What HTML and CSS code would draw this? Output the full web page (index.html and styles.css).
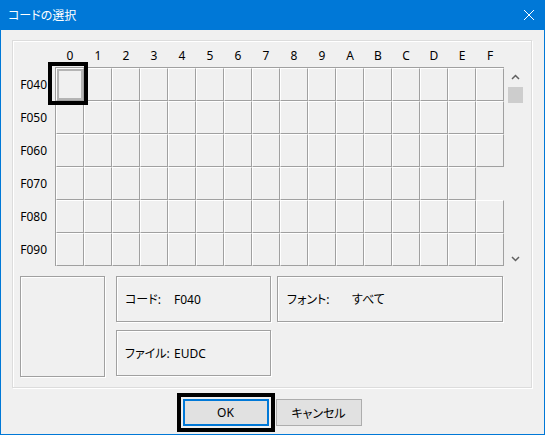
FILE: index.html
```html
<!DOCTYPE html>
<html lang="ja">
<head>
  <meta charset="UTF-8" />
  <title>コードの選択</title>
  <link rel="stylesheet" href="styles.css">
</head>
<body>
  <div class="window">
    <div class="titlebar">
      <span class="title">コードの選択</span>
      <svg class="close" width="10" height="10" viewBox="0 0 10 10"><path d="M0 0L10 10M10 0L0 10" stroke="#fff" stroke-width="1"/></svg>
    </div>

    <div class="body">
      <div class="group">
        <div class="board">
          <div class="labels">
            <div class="rl">F040</div>
            <div class="rl">F050</div>
            <div class="rl">F060</div>
            <div class="rl">F070</div>
            <div class="rl">F080</div>
            <div class="rl">F090</div>
          </div>
          <div class="matrix">
            <div class="heads">
              <span>0</span><span>1</span><span>2</span><span>3</span>
              <span>4</span><span>5</span><span>6</span><span>7</span>
              <span>8</span><span>9</span><span>A</span><span>B</span>
              <span>C</span><span>D</span><span>E</span><span>F</span>
            </div>
            <div class="cells" id="cells">
              <div class="selframe"></div>
            </div>
          </div>
          <div class="scroll">
            <div class="arrow"><svg width="9" height="6" viewBox="0 0 9 6"><path d="M1 5L4.5 1.5L8 5" fill="none" stroke="#606060" stroke-width="1.5"/></svg></div>
            <div class="thumb"></div>
            <div class="track"></div>
            <div class="arrow"><svg width="9" height="6" viewBox="0 0 9 6"><path d="M1 1L4.5 4.5L8 1" fill="none" stroke="#606060" stroke-width="1.5"/></svg></div>
          </div>
        </div>

        <div class="lower">
          <div class="preview"></div>
          <div class="fields">
            <div class="panel code"><span class="lbl">コード:</span><span>F040</span></div>
            <div class="panel font"><span class="lbl">フォント:</span><span>すべて</span></div>
            <div class="panel file"><span class="lbl">ファイル:</span><span>EUDC</span></div>
          </div>
        </div>
      </div>

      <div class="buttons">
        <button class="btn ok">OK</button>
        <button class="btn">キャンセル</button>
      </div>
    </div>
  </div>

  <script>
    // 6 rows x 16 columns of code cells, F07F has no cell
    const cells = document.getElementById('cells');
    for (let i = 0; i < 96; i++) {
      const c = document.createElement('div');
      c.className = 'cell';
      if (i === 0) c.className += ' sel';
      if (i === 63) c.className += ' none';
      cells.appendChild(c);
    }
  </script>
</body>
</html>
```

FILE: styles.css
```css
* {
  box-sizing: border-box;
}
body {
  margin: 0;
  font-family: "Noto Sans", "Noto Sans CJK JP", sans-serif;
  font-size: 12px;
  font-feature-settings: "palt";
  color: #000;
}
.window {
  width: 545px;
  height: 435px;
  border: 1px solid #0078d7;
  border-top: 0;
  background: #f0f0f0;
}
.titlebar {
  height: 30px;
  background: #0078d7;
  color: #fff;
  display: flex;
  align-items: center;
  justify-content: space-between;
  padding: 0 10px 0 7px;
}
.body {
  padding: 10px 12px 0 11px;
}
.group {
  border: 1px solid #dcdcdc;
  box-shadow: 1px 1px 0 #fff, inset 1px 1px 0 #fff;
  padding-bottom: 10px;
}
.board {
  display: flex;
}
.labels {
  width: 42px;
  padding-top: 27px;
}
.rl {
  height: 33px;
  line-height: 33px;
  text-align: right;
  padding-right: 8px;
}
.heads {
  display: grid;
  grid-template-columns: repeat(16, 28px);
  margin: 7px 0 3px 1px;
  line-height: 16px;
  text-align: center;
}
.cells {
  position: relative;
  display: grid;
  grid-template-columns: repeat(16, 28px);
  grid-auto-rows: 33px;
  border-top: 1px solid #a0a0a0;
  border-left: 1px solid #a0a0a0;
}
.cell {
  border: 1px solid;
  border-color: #fff #a0a0a0 #a0a0a0 #fff;
}
.cell.sel {
  box-shadow: inset 0 0 0 2px #b4b4b4;
}
.cell.none {
  border-color: transparent;
}
.selframe {
  position: absolute;
  left: -8px;
  top: -6px;
  width: 40px;
  height: 43px;
  border: 4px solid #000;
  z-index: 1;
}
.scroll {
  width: 17px;
  height: 200px;
  margin: 27px 0 0 3px;
  display: flex;
  flex-direction: column;
}
.arrow {
  height: 18px;
  display: flex;
  align-items: center;
  justify-content: center;
}
.thumb {
  height: 16px;
  margin: 1px 1px 0;
  background: #cdcdcd;
}
.track {
  flex: 1;
}
.lower {
  display: flex;
  margin-top: 8px;
  padding-left: 7px;
}
.preview,
.panel {
  border: 1px solid #a0a0a0;
  box-shadow: 1px 1px 0 #fff, inset 1px 1px 0 #fff;
}
.preview {
  width: 85px;
  height: 101px;
}
.fields {
  margin-left: 11px;
  display: grid;
  grid-template-columns: 155px 226px;
  grid-template-rows: 46px 46px;
  gap: 8px 6px;
}
.panel {
  display: flex;
  align-items: center;
  padding-left: 8px;
}
.code .lbl,
.file .lbl {
  width: 49px;
}
.font {
  padding-left: 9px;
}
.font .lbl {
  width: 65px;
}
.buttons {
  display: flex;
  justify-content: center;
  gap: 7px;
  margin-top: 11px;
}
.btn {
  width: 86px;
  height: 27px;
  padding: 0;
  font: inherit;
  color: #000;
  background: #e1e1e1;
  border: 1px solid #adadad;
}
.btn.ok {
  border: 2px solid #0078d7;
  outline: 4px solid #000;
  outline-offset: 2px;
}
```
